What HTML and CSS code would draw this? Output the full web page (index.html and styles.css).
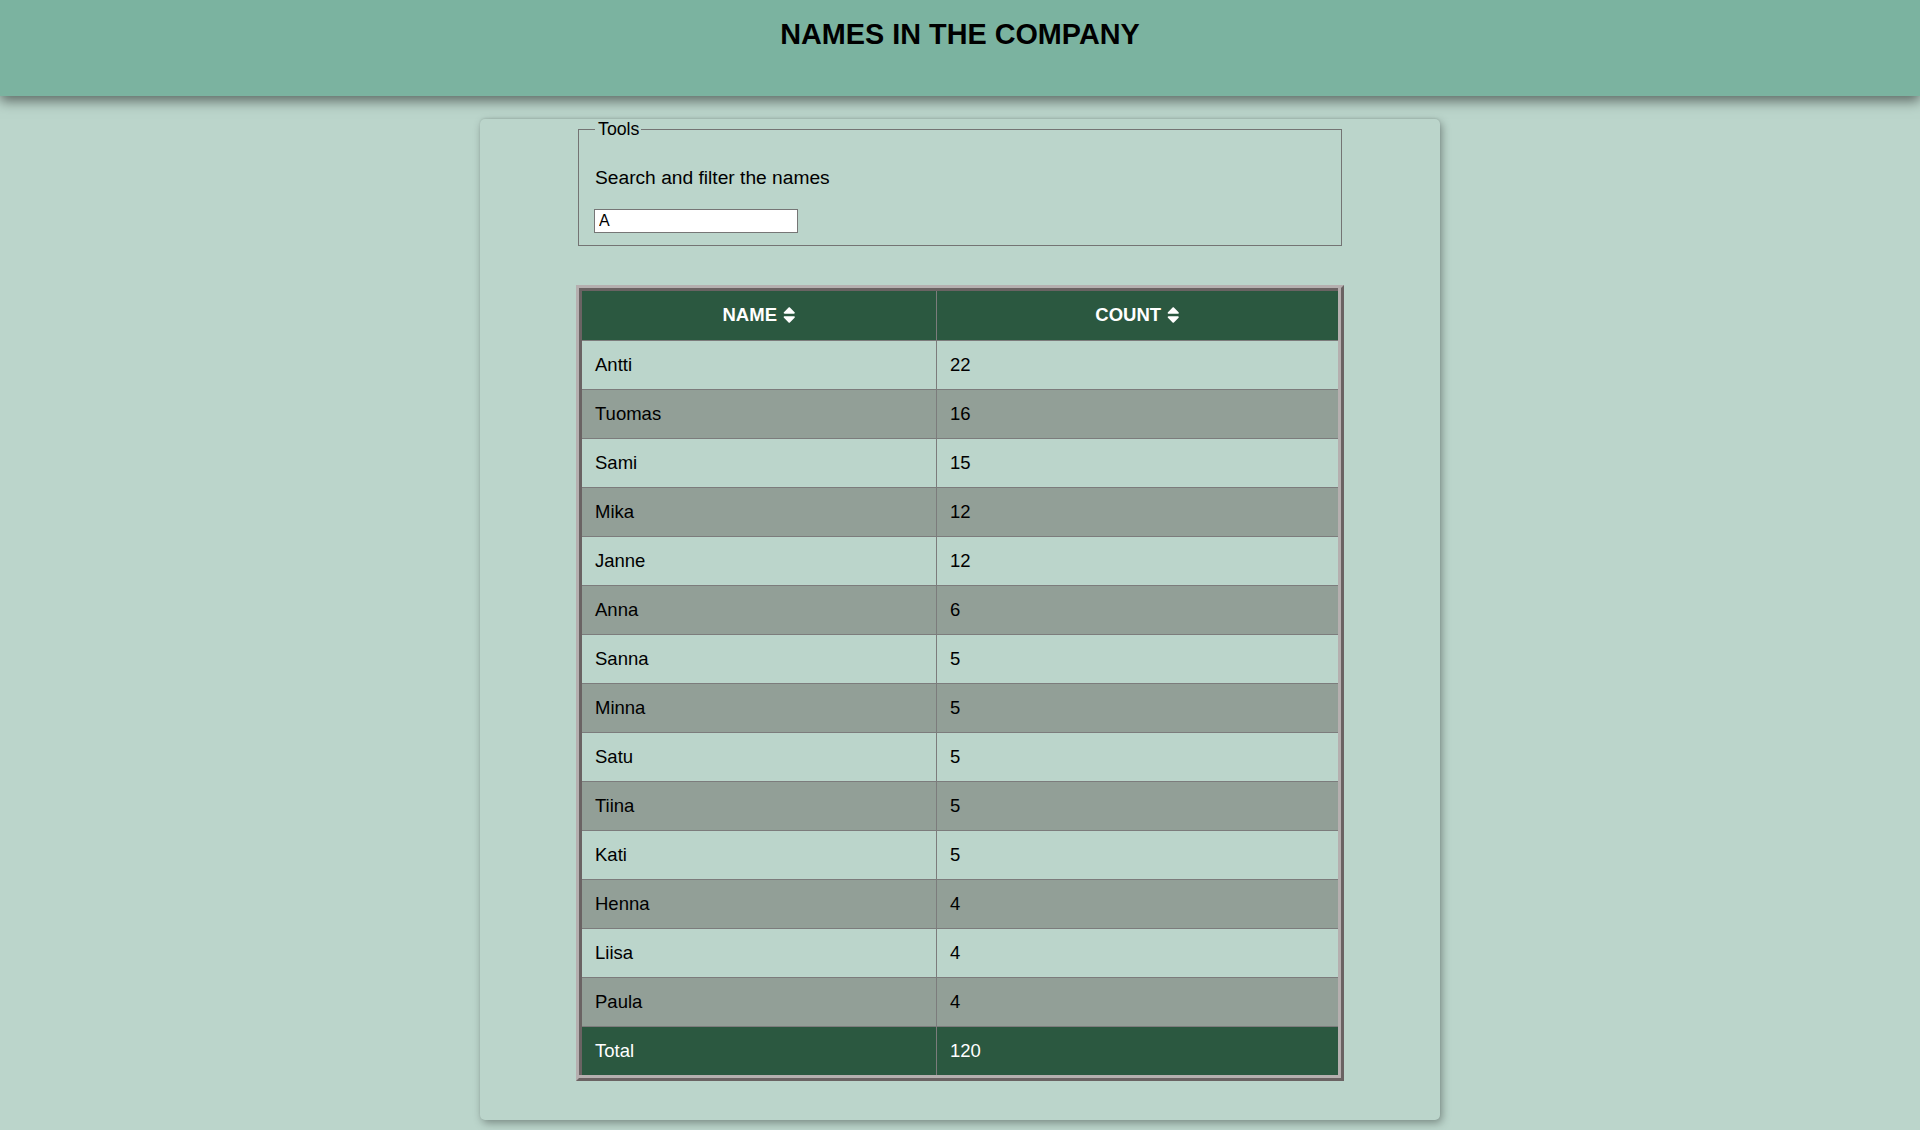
FILE: index.html
```html
<!DOCTYPE html>
<html lang="en">
<head>
<meta charset="utf-8">
<title>Names in the company</title>
<link rel="stylesheet" href="styles.css">
</head>
<body>
<header class="topbar">
  <h1 class="title">NAMES IN THE COMPANY</h1>
</header>
<main class="card">
  <fieldset class="tools">
    <legend class="tools-legend">Tools</legend>
    <p class="tools-text">Search and filter the names</p>
    <input class="search" type="text" value="A">
  </fieldset>
  <div class="table-frame">
    <table class="names">
      <colgroup>
        <col class="col-name">
        <col class="col-count">
      </colgroup>
      <thead>
        <tr>
          <th><span class="th-inner">NAME<svg class="sort" viewBox="0 0 320 512"><path d="M41 288h238c21.4 0 32.1 25.9 17 41L177 448c-9.4 9.4-24.6 9.4-33.9 0L24 329c-15.1-15.1-4.4-41 17-41zm255-105L177 64c-9.4-9.4-24.6-9.4-33.9 0L24 183c-15.1 15.1-4.4 41 17 41h238c21.4 0 32.1-25.9 17-41z"/></svg></span></th>
          <th><span class="th-inner">COUNT<svg class="sort" viewBox="0 0 320 512"><path d="M41 288h238c21.4 0 32.1 25.9 17 41L177 448c-9.4 9.4-24.6 9.4-33.9 0L24 329c-15.1-15.1-4.4-41 17-41zm255-105L177 64c-9.4-9.4-24.6-9.4-33.9 0L24 183c-15.1 15.1-4.4 41 17 41h238c21.4 0 32.1-25.9 17-41z"/></svg></span></th>
        </tr>
      </thead>
      <tbody>
        <tr><td>Antti</td><td>22</td></tr>
        <tr><td>Tuomas</td><td>16</td></tr>
        <tr><td>Sami</td><td>15</td></tr>
        <tr><td>Mika</td><td>12</td></tr>
        <tr><td>Janne</td><td>12</td></tr>
        <tr><td>Anna</td><td>6</td></tr>
        <tr><td>Sanna</td><td>5</td></tr>
        <tr><td>Minna</td><td>5</td></tr>
        <tr><td>Satu</td><td>5</td></tr>
        <tr><td>Tiina</td><td>5</td></tr>
        <tr><td>Kati</td><td>5</td></tr>
        <tr><td>Henna</td><td>4</td></tr>
        <tr><td>Liisa</td><td>4</td></tr>
        <tr><td>Paula</td><td>4</td></tr>
      </tbody>
      <tfoot>
        <tr><td>Total</td><td>120</td></tr>
      </tfoot>
    </table>
  </div>
</main>
</body>
</html>
```

FILE: styles.css
```css
html, body {
  margin: 0;
  padding: 0;
}

body {
  background: #bbd5cb;
  font-family: "Liberation Sans", Arial, sans-serif;
  color: #000;
  min-height: 1130px;
}

.topbar {
  position: relative;
  z-index: 2;
  box-sizing: border-box;
  height: 96px;
  padding-top: 18px;
  background: #7bb3a0;
  box-shadow: 0 5px 12px rgba(0, 0, 0, 0.5);
}

.title {
  margin: 0;
  text-align: center;
  font-size: 28.8px;
  font-weight: bold;
  line-height: normal;
  color: #000;
}

.card {
  position: relative;
  z-index: 1;
  box-sizing: border-box;
  width: 960px;
  margin: 23px auto 0;
  padding: 0 96px 39px;
  background: #bbd5cb;
  border-radius: 5px;
  box-shadow: 2px 3px 8px rgba(0, 0, 0, 0.35), 0 -1px 2px rgba(0, 0, 0, 0.08);
}

.tools {
  margin: 0 2px;
  padding: 7px 16px 12px;
  border: 1px solid #747474;
  min-width: 0;
}

.tools-legend {
  padding: 0 2px 0 3px;
  font-size: 17.75px;
  line-height: normal;
}

.tools-text {
  margin: 20px 0 20px;
  font-size: 19.2px;
  line-height: 22px;
}

.search {
  display: block;
  box-sizing: border-box;
  width: 204px;
  height: 24px;
  margin: 0 0 0 -1px;
  padding: 1px 4px;
  border: 1px solid #767676;
  border-radius: 0;
  background: #fff;
  font-family: "Liberation Sans", Arial, sans-serif;
  font-size: 16px;
  color: #000;
}

.table-frame {
  margin-top: 39px;
  border-style: solid;
  border-width: 3px;
  border-color: #b5afaf #6a6363 #6a6363 #b5afaf;
}

.names {
  width: 100%;
  border-collapse: collapse;
  table-layout: fixed;
  border-style: solid;
  border-width: 3px;
  border-color: #6a6363 #b5afaf #b5afaf #6a6363;
  box-sizing: border-box;
  font-size: 18.5px;
}

.col-name {
  width: 356px;
}

.names th,
.names td {
  border: 1px solid #7c7c7c;
  line-height: 22px;
  text-align: left;
  padding: 13px 13px;
}

.names tr > :first-child { border-left: none; }
.names tr > :last-child { border-right: none; }
.names thead tr > * { border-top: none; }
.names tfoot tr > * { border-bottom: none; }

.names th {
  background: #2b5840;
  color: #fff;
  font-weight: bold;
  text-align: center;
  padding-bottom: 14px;
}

.th-inner {
  display: inline-flex;
  align-items: center;
  gap: 6px;
}

.sort {
  width: 12.5px;
  height: 20px;
  fill: #fff;
}

.names tbody tr:nth-child(odd) td {
  background: #bbd5cb;
}

.names tbody tr:nth-child(even) td {
  background: #929f97;
}

.names tfoot td {
  background: #2b5840;
  color: #fff;
}
```
